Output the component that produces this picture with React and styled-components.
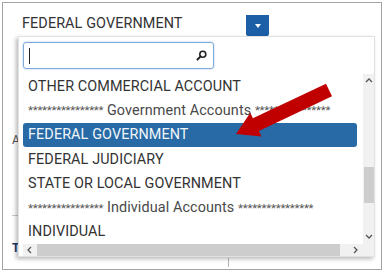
import React from 'react';
import styled, { createGlobalStyle } from 'styled-components';

const Global = createGlobalStyle`
	html, body {
		margin: 0;
		padding: 0;
		background: #fff;
	}
	body {
		font-family: 'Roboto', 'Liberation Sans', sans-serif;
		color: #3a3a3a;
	}
`;

const Frame = styled.div`
	position: relative;
	box-sizing: border-box;
	margin: 2px;
	width: 380px;
	height: 268px;
	border: 1px solid #a3a3a3;
	overflow: hidden;
`;

const SelectRow = styled.div`
	display: flex;
	align-items: flex-end;
	margin: 7px 6px 0 15px;
	height: 26px;
	border-bottom: 1px solid #d9d9d9;
`;

const SelectField = styled.div`
	display: flex;
	align-items: flex-end;
	width: 251px;
	height: 100%;
`;

const SelectValue = styled.div`
	flex: 1;
	align-self: center;
	padding-left: 4px;
	font-size: 14.4px;
	color: #333;
	letter-spacing: 0.1px;
`;

const ArrowButton = styled.div`
	display: flex;
	align-items: center;
	justify-content: center;
	width: 23px;
	height: 21px;
	background: #1c5fa6;
	border-radius: 0 0 2px 2px;
	&::after {
		content: '';
		border-left: 3px solid transparent;
		border-right: 3px solid transparent;
		border-top: 4px solid #fff;
	}
`;

const Behind = styled.div`
	display: flex;
	flex-direction: column;
	padding: 96px 0 0 9px;
	font-size: 12px;
	color: #444;
`;

const Peek = styled.span`
	height: ${(p) => p.h}px;
	color: ${(p) => p.color || '#555'};
	font-weight: ${(p) => (p.bold ? 700 : 400)};
`;

const Rule = styled.div`
	width: 10px;
	height: 1px;
	background: #c8c8c8;
	margin-bottom: 25px;
`;

const Tick = styled.div`
	position: absolute;
	left: 225px;
	bottom: 2px;
	width: 1px;
	height: 9px;
	background: #b5b5b5;
`;

const Dropdown = styled.div`
	position: absolute;
	left: 15px;
	top: 33px;
	width: 357px;
	height: 221px;
	box-sizing: border-box;
	background: #fff;
	border: 1px solid #e2e2e2;
	box-shadow: -2px 2px 4px rgba(0, 0, 0, 0.28);
	display: flex;
	flex-direction: column;
	padding: 5px 0 0 4px;
`;

const Search = styled.div`
	display: flex;
	align-items: center;
	justify-content: space-between;
	box-sizing: border-box;
	width: 191px;
	height: 27px;
	border: 1px solid #7ea9d9;
	border-radius: 3px;
	box-shadow: 0 0 2px rgba(80, 140, 210, 0.5);
	padding: 0 6px 0 5px;
`;

const Caret = styled.div`
	width: 1px;
	height: 16px;
	background: #222;
`;

const ListArea = styled.div`
	display: grid;
	grid-template-columns: 340px 11px;
	grid-template-rows: 170px 12px;
	margin-top: 5px;
`;

const Options = styled.div`
	display: flex;
	flex-direction: column;
	overflow: hidden;
	padding-right: 6px;
`;

const Option = styled.div`
	display: flex;
	align-items: center;
	height: 24.3px;
	flex-shrink: 0;
	padding-left: 5px;
	border-radius: 3px;
	white-space: nowrap;
	font-size: 14.4px;
	color: ${(p) => (p.active ? '#f2f6fa' : p.group ? '#4a4a4a' : '#333')};
	background: ${(p) => (p.active ? '#276aa5' : 'transparent')};
	letter-spacing: 0.1px;
`;

const Stars = styled.span`
	font-size: 11.5px;
	letter-spacing: -0.25px;
	color: #555;
`;

const VScroll = styled.div`
	display: flex;
	flex-direction: column;
	align-items: center;
	background: #f1f1f1;
	padding: 3px 0;
	box-sizing: border-box;
`;

const HScroll = styled.div`
	display: flex;
	align-items: center;
	background: #f1f1f1;
	padding: 0 3px;
	box-sizing: border-box;
`;

const Corner = styled.div`
	background: #f1f1f1;
`;

const Thumb = styled.div`
	background: #cdcdcd;
	${(p) => (p.vertical ? 'width: 10px; height: 36px; margin-top: 82px;' : 'flex: 1; height: 12px; margin: 0 12px 0 3px;')}
`;

const Chevron = ({ dir }) => {
	const d = {
		up: 'M1 5 L4 2 L7 5',
		down: 'M1 2 L4 5 L7 2',
		left: 'M5 1 L2 4 L5 7',
		right: 'M2 1 L5 4 L2 7',
	}[dir];
	return (
		<svg width='8' height='8' viewBox='0 0 8 8' style={{ flexShrink: 0 }}>
			<path d={d} fill='none' stroke='#555' strokeWidth='1.3' />
		</svg>
	);
};

const Spacer = styled.div`
	flex: 1;
`;

const RedArrow = styled.svg`
	position: absolute;
	left: -2px;
	top: -2px;
	pointer-events: none;
`;

const STARS = '****************';

const options = [
	{ label: 'OTHER COMMERCIAL ACCOUNT' },
	{ label: 'Government Accounts', group: true },
	{ label: 'FEDERAL GOVERNMENT', active: true },
	{ label: 'FEDERAL JUDICIARY' },
	{ label: 'STATE OR LOCAL GOVERNMENT' },
	{ label: 'Individual Accounts', group: true },
	{ label: 'INDIVIDUAL' },
];

const App = () => (
	<>
		<Global />
		<Frame>
			<SelectRow>
				<SelectField>
					<SelectValue>FEDERAL GOVERNMENT</SelectValue>
					<ArrowButton />
				</SelectField>
			</SelectRow>
			<Behind>
				<Peek h={82}>A</Peek>
				<Rule />
				<Peek h={14} color='#1d3a6b' bold>
					T
				</Peek>
			</Behind>
			<Tick />
			<Dropdown>
				<Search>
					<Caret />
					<svg width='11' height='11' viewBox='0 0 11 11'>
						<circle cx='6.8' cy='4.2' r='3' fill='none' stroke='#222' strokeWidth='1.6' />
						<path d='M4.6 6.4 L1.5 9.5' stroke='#222' strokeWidth='2' strokeLinecap='round' />
					</svg>
				</Search>
				<ListArea>
					<Options>
						{options.map((o) => (
							<Option key={o.label} group={o.group} active={o.active}>
								{o.group ? (
									<>
										<Stars>{STARS}</Stars>&nbsp;{o.label}&nbsp;<Stars>{STARS}</Stars>
									</>
								) : (
									o.label
								)}
							</Option>
						))}
					</Options>
					<VScroll>
						<Chevron dir='up' />
						<Thumb vertical />
						<Spacer />
						<Chevron dir='down' />
					</VScroll>
					<HScroll>
						<Chevron dir='left' />
						<Thumb />
						<Chevron dir='right' />
					</HScroll>
					<Corner />
				</ListArea>
			</Dropdown>
			<RedArrow width='385' height='273' viewBox='0 0 385 273'>
				<polygon
					points='235,133 249.3,111.8 251.9,117.3 325,82.7 331,95.3 257.9,129.9 260.5,135.4'
					fill='#c00000'
				/>
			</RedArrow>
		</Frame>
	</>
);

export default App;
